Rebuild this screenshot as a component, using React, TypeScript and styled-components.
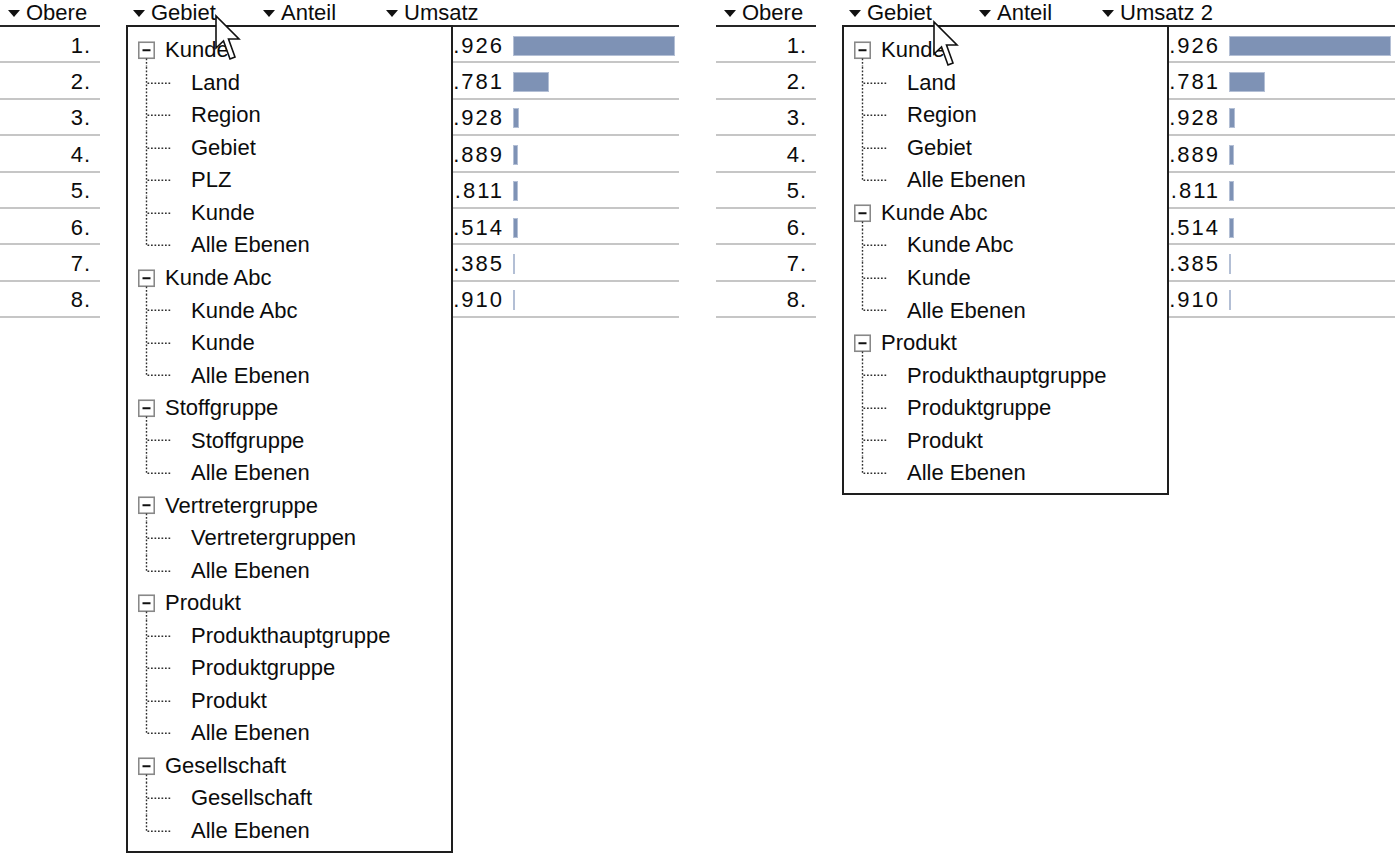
import React from "react";
import styled, { createGlobalStyle } from "styled-components";

interface Group {
  title: string;
  items: string[];
}

interface DataRowItem {
  rank: number;
  umsatz: string;
  amount: number;
}

const ROW_H = 32.54;
const MAX_BAR = 162;

const leftTree: Group[] = [
  { title: "Kunde", items: ["Land", "Region", "Gebiet", "PLZ", "Kunde", "Alle Ebenen"] },
  { title: "Kunde Abc", items: ["Kunde Abc", "Kunde", "Alle Ebenen"] },
  { title: "Stoffgruppe", items: ["Stoffgruppe", "Alle Ebenen"] },
  { title: "Vertretergruppe", items: ["Vertretergruppen", "Alle Ebenen"] },
  { title: "Produkt", items: ["Produkthauptgruppe", "Produktgruppe", "Produkt", "Alle Ebenen"] },
  { title: "Gesellschaft", items: ["Gesellschaft", "Alle Ebenen"] },
];

const rightTree: Group[] = [
  { title: "Kunde", items: ["Land", "Region", "Gebiet", "Alle Ebenen"] },
  { title: "Kunde Abc", items: ["Kunde Abc", "Kunde", "Alle Ebenen"] },
  { title: "Produkt", items: ["Produkthauptgruppe", "Produktgruppe", "Produkt", "Alle Ebenen"] },
];

const rows: DataRowItem[] = [
  { rank: 1, umsatz: "1.845.926", amount: 1845926 },
  { rank: 2, umsatz: "410.781", amount: 410781 },
  { rank: 3, umsatz: "68.928", amount: 68928 },
  { rank: 4, umsatz: "57.889", amount: 57889 },
  { rank: 5, umsatz: "57.811", amount: 57811 },
  { rank: 6, umsatz: "55.514", amount: 55514 },
  { rank: 7, umsatz: "25.385", amount: 25385 },
  { rank: 8, umsatz: "24.910", amount: 24910 },
];

const maxAmount = Math.max(...rows.map((r) => r.amount));

const GlobalStyle = createGlobalStyle`
  html, body {
    margin: 0;
    padding: 0;
    background: #ffffff;
  }
  body {
    font-family: "Liberation Sans", Arial, sans-serif;
    color: #0c0c0c;
  }
  * {
    box-sizing: border-box;
  }
`;

const Page = styled.div`
  display: flex;
  width: 1397px;
  height: 856px;
  overflow: hidden;
`;

const Panel = styled.div`
  position: relative;
  flex: none;
  width: 716px;
  display: flex;
  align-items: flex-start;
`;

const RankTable = styled.div`
  width: 100px;
  display: flex;
  flex-direction: column;
`;

const MainTable = styled.div`
  width: 553px;
  margin-left: 26px;
  display: flex;
  flex-direction: column;
`;

const HeaderRow = styled.div<{ $cols: string }>`
  display: grid;
  grid-template-columns: ${(p) => p.$cols};
  height: 27px;
  border-bottom: 2px solid #262626;
`;

const HeaderCell = styled.div<{ $pad: number }>`
  display: flex;
  align-items: center;
  gap: 6px;
  padding-left: ${(p) => p.$pad}px;
  font-size: 22px;
  white-space: nowrap;
`;

const SortArrow = styled.span`
  width: 0;
  height: 0;
  border-left: 6.5px solid transparent;
  border-right: 6.5px solid transparent;
  border-top: 7px solid #111;
`;

const DataRow = styled.div<{ $cols: string }>`
  display: grid;
  grid-template-columns: ${(p) => p.$cols};
  align-items: center;
  height: 36.4px;
  padding-top: 3px;
  border-bottom: 2px solid #c6c6c6;
  font-size: 22px;
`;

const RankValue = styled.div`
  text-align: right;
  padding-right: 9px;
  letter-spacing: 1px;
`;

const UmsatzCell = styled.div`
  display: flex;
  align-items: center;
`;

const Amount = styled.div`
  width: 125px;
  text-align: right;
  white-space: nowrap;
  letter-spacing: 2px;
`;

const Bar = styled.div`
  margin-left: 9px;
  height: 20px;
  background: #7e92b5;
  border: 1px solid #b3bfd5;
`;

const Dropdown = styled.div`
  position: absolute;
  top: 25px;
  left: 126px;
  width: 327px;
  padding: 7px 0 4px;
  background: #ffffff;
  border: 2px solid #1e1e1e;
  z-index: 2;
`;

const TreeRow = styled.div`
  display: flex;
  align-items: center;
  height: ${ROW_H}px;
  padding-left: 10px;
  font-size: 22px;
  white-space: nowrap;
`;

const Label = styled.span<{ $gap: number }>`
  margin-left: ${(p) => p.$gap}px;
`;

const CursorLayer = styled.svg<{ $x: number; $y: number }>`
  position: absolute;
  left: ${(p) => p.$x - 1}px;
  top: ${(p) => p.$y - 1}px;
  z-index: 3;
  overflow: visible;
`;

const DOT = { stroke: "#303030", strokeWidth: 1.4, strokeDasharray: "1.7 1.8" };

const Toggle: React.FC = () => (
  <svg width={17} height={ROW_H}>
    <rect x={0.75} y={8.25} width={15.5} height={16} fill="#fff" stroke="#888" strokeWidth={1.6} />
    <line x1={4.5} y1={16.25} x2={12.5} y2={16.25} stroke="#111" strokeWidth={2} />
    <line x1={8.5} y1={24.5} x2={8.5} y2={ROW_H} {...DOT} />
  </svg>
);

const Branch: React.FC<{ last: boolean }> = ({ last }) => (
  <svg width={34} height={ROW_H}>
    <line x1={8.5} y1={0} x2={8.5} y2={last ? ROW_H / 2 : ROW_H} {...DOT} />
    <line x1={9.5} y1={ROW_H / 2} x2={34} y2={ROW_H / 2} {...DOT} />
  </svg>
);

const Cursor: React.FC<{ x: number; y: number }> = ({ x, y }) => (
  <CursorLayer $x={x} $y={y} width={26} height={46}>
    <polygon
      points="1,1 1,33 8.5,26 15,44 20,42 13.5,24 24,24"
      fill="#fff"
      stroke="#111"
      strokeWidth={1.6}
      strokeLinejoin="miter"
    />
  </CursorLayer>
);

const LevelMenu: React.FC<{ groups: Group[] }> = ({ groups }) => (
  <Dropdown>
    {groups.map((g) => (
      <React.Fragment key={g.title}>
        <TreeRow>
          <Toggle />
          <Label $gap={10}>{g.title}</Label>
        </TreeRow>
        {g.items.map((item, i) => (
          <TreeRow key={g.title + item}>
            <Branch last={i === g.items.length - 1} />
            <Label $gap={19}>{item}</Label>
          </TreeRow>
        ))}
      </React.Fragment>
    ))}
  </Dropdown>
);

const MAIN_COLS = "130px 123px 300px";

const ReportPanel: React.FC<{
  umsatzLabel: string;
  tree: Group[];
  cursor: { x: number; y: number };
}> = ({ umsatzLabel, tree, cursor }) => (
  <Panel>
    <RankTable>
      <HeaderRow $cols="1fr">
        <HeaderCell $pad={8}>
          <SortArrow />
          Obere
        </HeaderCell>
      </HeaderRow>
      {rows.map((r) => (
        <DataRow key={r.rank} $cols="1fr">
          <RankValue>{r.rank}.</RankValue>
        </DataRow>
      ))}
    </RankTable>
    <MainTable>
      <HeaderRow $cols={MAIN_COLS}>
        <HeaderCell $pad={7}>
          <SortArrow />
          Gebiet
        </HeaderCell>
        <HeaderCell $pad={7}>
          <SortArrow />
          Anteil
        </HeaderCell>
        <HeaderCell $pad={7}>
          <SortArrow />
          {umsatzLabel}
        </HeaderCell>
      </HeaderRow>
      {rows.map((r) => (
        <DataRow key={r.rank} $cols={MAIN_COLS}>
          <div />
          <div />
          <UmsatzCell>
            <Amount>{r.umsatz}</Amount>
            <Bar style={{ width: Math.max(2, Math.round((r.amount / maxAmount) * MAX_BAR)) }} />
          </UmsatzCell>
        </DataRow>
      ))}
    </MainTable>
    <LevelMenu groups={tree} />
    <Cursor x={cursor.x} y={cursor.y} />
  </Panel>
);

export default function App() {
  return (
    <>
      <GlobalStyle />
      <Page>
        <ReportPanel umsatzLabel="Umsatz" tree={leftTree} cursor={{ x: 216, y: 16 }} />
        <ReportPanel umsatzLabel="Umsatz 2" tree={rightTree} cursor={{ x: 218, y: 22 }} />
      </Page>
    </>
  );
}
